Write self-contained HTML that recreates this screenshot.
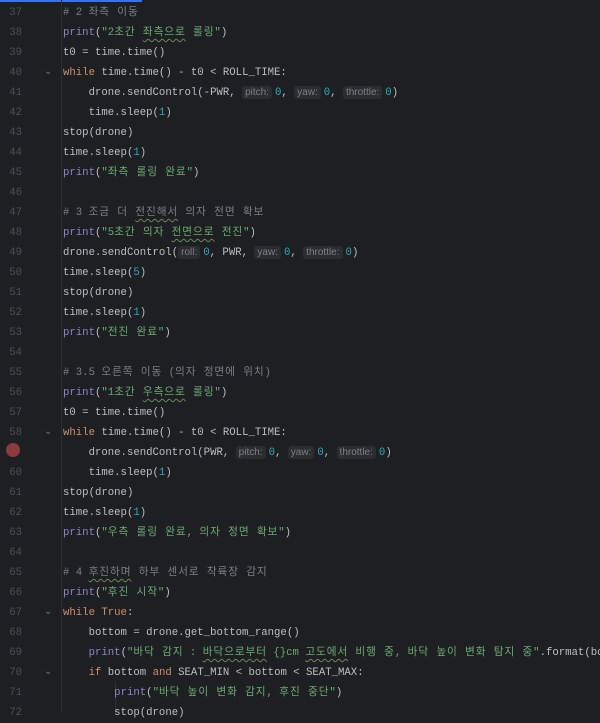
<!DOCTYPE html>
<html><head><meta charset="utf-8"><style>
body{margin:0;background:#1e1f22;width:600px;height:713px;overflow:hidden;position:relative;font-family:"Liberation Mono","Noto Sans CJK KR",monospace;font-size:10.67px;color:#bcbec4}
.top{position:absolute;left:0;top:0;width:142px;height:2px;background:#3574f0}
.sep{position:absolute;left:61px;top:0;width:1px;height:713px;background:#2b2d30}
.l{position:absolute;left:0;margin-top:2px;height:20px;line-height:20px;white-space:pre;width:600px;overflow:hidden}
.n{position:absolute;left:0;width:22px;text-align:right;color:#4b5059}
.f{position:absolute;left:44px;color:#6f737a;font-size:10px}
.c{position:absolute;left:63px}
.k{color:#cf8e6d}.s{color:#6aab73}.d{color:#2aacb8}.m{color:#7a7e85}.p{color:#8888c6}
.K{letter-spacing:0.9px}
.h{background:#2b2d30;color:#7d8086;border-radius:3px;padding:1px 3px;font-family:"Liberation Sans",sans-serif;font-size:10px;margin-right:3px}
.w{text-decoration:underline wavy #6a8759;text-underline-offset:3px;text-decoration-thickness:1px}
.bp{position:absolute;left:6px;top:443px;width:14px;height:14px;border-radius:50%;background:#8b3a3e}
.g{position:absolute;left:89px;width:1px;background:#2f3134}
</style></head><body>
<div class="top"></div><div class="sep"></div>
<div class="bp"></div>
<div class="g" style="left:115px;top:682px;height:31px"></div>
<div class="l" style="top:1px"><span class="n">37</span><span class="c"><span class="m"># 2 <span class="K">좌측 이동</span></span></span></div>
<div class="l" style="top:21px"><span class="n">38</span><span class="c"><span class="p">print</span>(<span class="s">"2<span class="K">초간 <span class="w">좌측으로</span> 롤링</span>"</span>)</span></div>
<div class="l" style="top:41px"><span class="n">39</span><span class="c">t0 = time.time()</span></div>
<div class="l" style="top:61px"><span class="n">40</span><span class="f">⌄</span><span class="c"><span class="k">while</span> time.time() - t0 &lt; ROLL_TIME:</span></div>
<div class="l" style="top:81px"><span class="n">41</span><span class="c">    drone.sendControl(-PWR, <span class="h">pitch:</span><span class="d">0</span>, <span class="h">yaw:</span><span class="d">0</span>, <span class="h">throttle:</span><span class="d">0</span>)</span></div>
<div class="l" style="top:101px"><span class="n">42</span><span class="c">    time.sleep(<span class="d">1</span>)</span></div>
<div class="l" style="top:121px"><span class="n">43</span><span class="c">stop(drone)</span></div>
<div class="l" style="top:141px"><span class="n">44</span><span class="c">time.sleep(<span class="d">1</span>)</span></div>
<div class="l" style="top:161px"><span class="n">45</span><span class="c"><span class="p">print</span>(<span class="s">"<span class="K">좌측 롤링 완료</span>"</span>)</span></div>
<div class="l" style="top:181px"><span class="n">46</span></div>
<div class="l" style="top:201px"><span class="n">47</span><span class="c"><span class="m"># 3 <span class="K">조금 더 <span class="w">전진해서</span> 의자 전면 확보</span></span></span></div>
<div class="l" style="top:221px"><span class="n">48</span><span class="c"><span class="p">print</span>(<span class="s">"5<span class="K">초간 의자 <span class="w">전면으로</span> 전진</span>"</span>)</span></div>
<div class="l" style="top:241px"><span class="n">49</span><span class="c">drone.sendControl(<span class="h">roll:</span><span class="d">0</span>, PWR, <span class="h">yaw:</span><span class="d">0</span>, <span class="h">throttle:</span><span class="d">0</span>)</span></div>
<div class="l" style="top:261px"><span class="n">50</span><span class="c">time.sleep(<span class="d">5</span>)</span></div>
<div class="l" style="top:281px"><span class="n">51</span><span class="c">stop(drone)</span></div>
<div class="l" style="top:301px"><span class="n">52</span><span class="c">time.sleep(<span class="d">1</span>)</span></div>
<div class="l" style="top:321px"><span class="n">53</span><span class="c"><span class="p">print</span>(<span class="s">"<span class="K">전진 완료</span>"</span>)</span></div>
<div class="l" style="top:341px"><span class="n">54</span></div>
<div class="l" style="top:361px"><span class="n">55</span><span class="c"><span class="m"># 3.5 <span class="K">오른쪽 이동</span> (<span class="K">의자 정면에 위치</span>)</span></span></div>
<div class="l" style="top:381px"><span class="n">56</span><span class="c"><span class="p">print</span>(<span class="s">"1<span class="K">초간 <span class="w">우측으로</span> 롤링</span>"</span>)</span></div>
<div class="l" style="top:401px"><span class="n">57</span><span class="c">t0 = time.time()</span></div>
<div class="l" style="top:421px"><span class="n">58</span><span class="f">⌄</span><span class="c"><span class="k">while</span> time.time() - t0 &lt; ROLL_TIME:</span></div>
<div class="l" style="top:441px"><span class="c">    drone.sendControl(PWR, <span class="h">pitch:</span><span class="d">0</span>, <span class="h">yaw:</span><span class="d">0</span>, <span class="h">throttle:</span><span class="d">0</span>)</span></div>
<div class="l" style="top:461px"><span class="n">60</span><span class="c">    time.sleep(<span class="d">1</span>)</span></div>
<div class="l" style="top:481px"><span class="n">61</span><span class="c">stop(drone)</span></div>
<div class="l" style="top:501px"><span class="n">62</span><span class="c">time.sleep(<span class="d">1</span>)</span></div>
<div class="l" style="top:521px"><span class="n">63</span><span class="c"><span class="p">print</span>(<span class="s">"<span class="K">우측 롤링 완료</span>, <span class="K">의자 정면 확보</span>"</span>)</span></div>
<div class="l" style="top:541px"><span class="n">64</span></div>
<div class="l" style="top:561px"><span class="n">65</span><span class="c"><span class="m"># 4 <span class="K"><span class="w">후진하며</span> 하부 센서로 착륙장 감지</span></span></span></div>
<div class="l" style="top:581px"><span class="n">66</span><span class="c"><span class="p">print</span>(<span class="s">"<span class="K">후진 시작</span>"</span>)</span></div>
<div class="l" style="top:601px"><span class="n">67</span><span class="f">⌄</span><span class="c"><span class="k">while True</span>:</span></div>
<div class="l" style="top:621px"><span class="n">68</span><span class="c">    bottom = drone.get_bottom_range()</span></div>
<div class="l" style="top:641px"><span class="n">69</span><span class="c">    <span class="p">print</span>(<span class="s">"<span class="K">바닥 감지</span> : <span class="K"><span class="w">바닥으로부터</span></span> {}cm <span class="K"><span class="w">고도에서</span> 비행 중</span>, <span class="K">바닥 높이 변화 탐지 중</span>"</span>.format(bottom))</span></div>
<div class="l" style="top:661px"><span class="n">70</span><span class="f">⌄</span><span class="c">    <span class="k">if</span> bottom <span class="k">and</span> SEAT_MIN &lt; bottom &lt; SEAT_MAX:</span></div>
<div class="l" style="top:681px"><span class="n">71</span><span class="c">        <span class="p">print</span>(<span class="s">"<span class="K">바닥 높이 변화 감지</span>, <span class="K">후진 중단</span>"</span>)</span></div>
<div class="l" style="top:701px"><span class="n">72</span><span class="c">        stop(drone)</span></div>
</body></html>
